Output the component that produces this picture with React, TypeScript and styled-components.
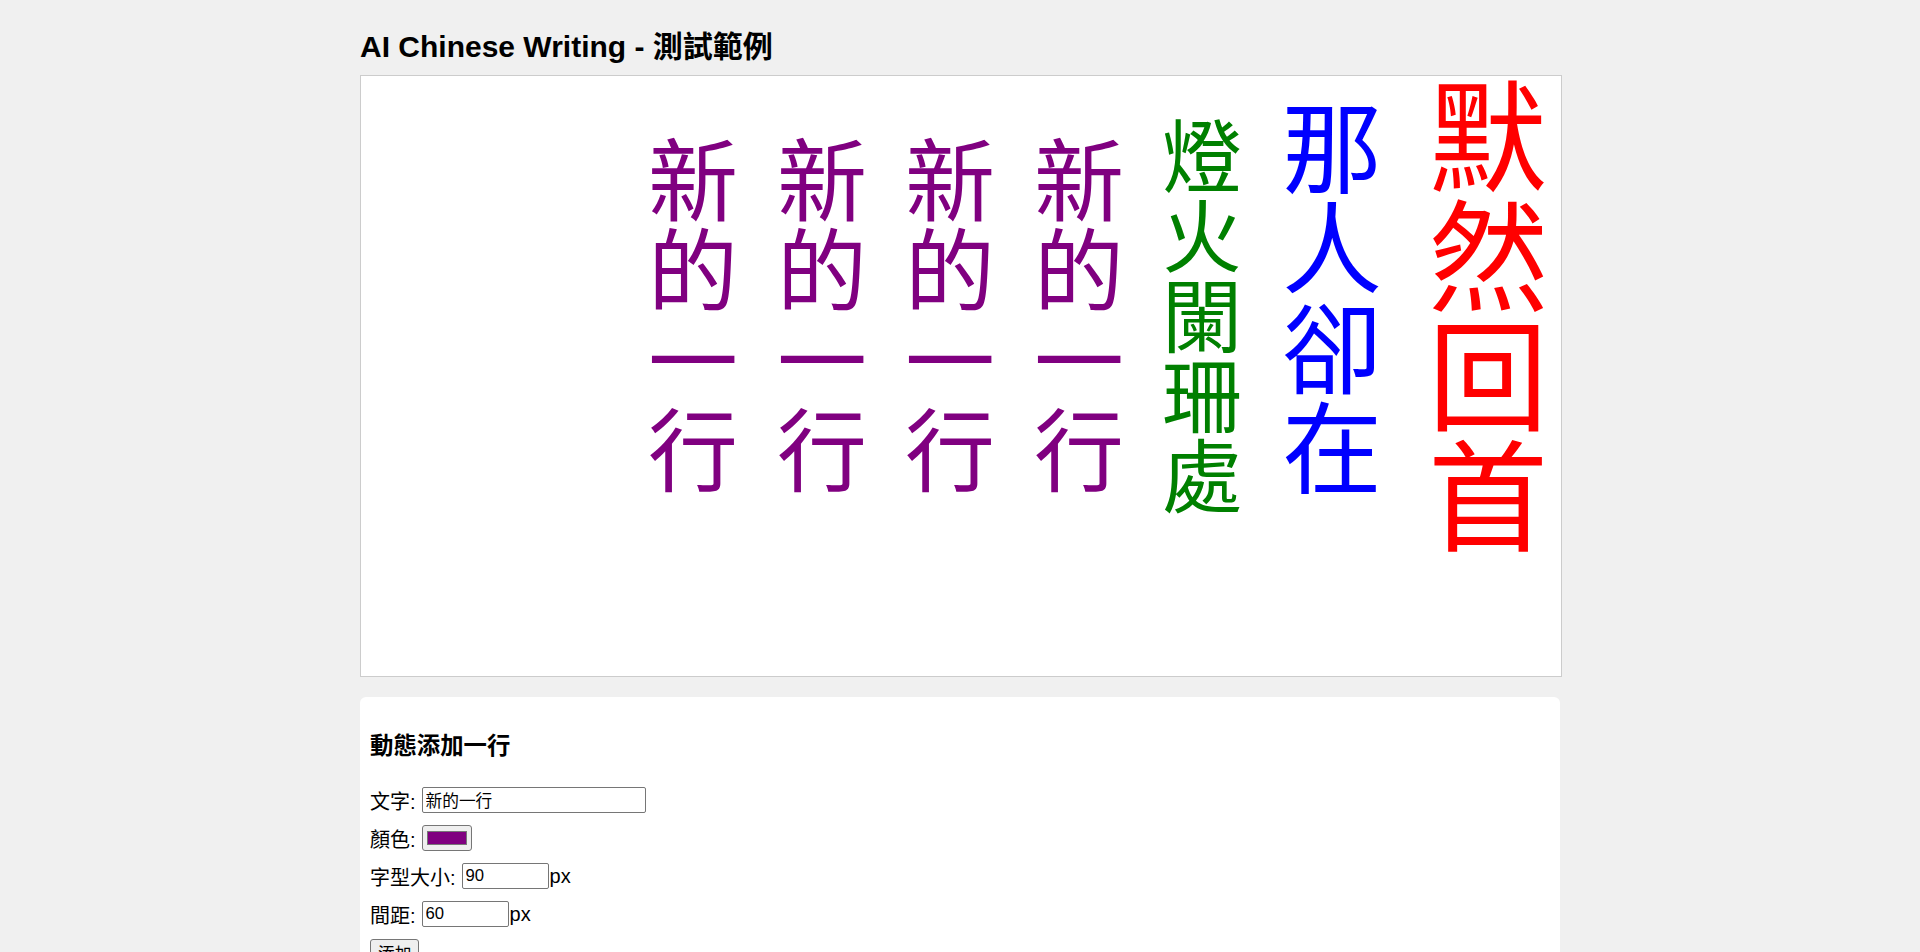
import React from "react";
import styled, { createGlobalStyle } from "styled-components";

const GlobalStyle = createGlobalStyle`
  html, body {
    margin: 0;
    padding: 0;
    background: #f0f0f0;
  }

  body {
    font-family: "Liberation Sans", "Noto Sans CJK TC", Arial, sans-serif;
    color: #000;
  }
`;

// columns drawn right to left, like the canvas output
const lines = [
  { text: "默然回首", color: "red", size: 120, x: 1067, y: -6 },
  { text: "那人卻在", color: "blue", size: 100, x: 921, y: 17 },
  { text: "燈火闌珊處", color: "green", size: 80, x: 801, y: 35 },
  { text: "新的一行", color: "purple", size: 90, x: 673, y: 54 },
  { text: "新的一行", color: "purple", size: 90, x: 544, y: 54 },
  { text: "新的一行", color: "purple", size: 90, x: 416, y: 54 },
  { text: "新的一行", color: "purple", size: 90, x: 287, y: 54 },
];

export default function App() {
  return (
    <>
      <GlobalStyle />
      <Page>
        <Title>AI Chinese Writing - 測試範例</Title>

        <Canvas>
          {lines.map((line, i) => (
            <Column
              key={i}
              $color={line.color}
              $size={line.size}
              $x={line.x}
              $y={line.y}
            >
              {Array.from(line.text).map((ch, j) => (
                <Char key={j}>{ch}</Char>
              ))}
            </Column>
          ))}
        </Canvas>

        <Controls>
          <Heading>動態添加一行</Heading>

          <Row>
            <Label>文字:</Label>
            <TextInput type="text" defaultValue="新的一行" />
          </Row>
          <Row>
            <Label>顏色:</Label>
            <ColorInput type="color" defaultValue="#800080" />
          </Row>
          <Row>
            <Label>字型大小:</Label>
            <NumberInput type="number" defaultValue={90} />
            <Unit>px</Unit>
          </Row>
          <Row>
            <Label>間距:</Label>
            <NumberInput type="number" defaultValue={60} />
            <Unit>px</Unit>
          </Row>
          <Row>
            <AddButton type="button">添加</AddButton>
          </Row>
        </Controls>
      </Page>
    </>
  );
}

const Page = styled.div`
  width: 1200px;
  margin: 0 auto;
  padding: 29px 0 40px;
`;

const Title = styled.h2`
  margin: 0 0 10px;
  font-size: 30px;
  line-height: 36px;
  font-weight: bold;
`;

const Canvas = styled.div`
  position: relative;
  width: 1200px;
  height: 600px;
  border: 1px solid #ccc;
  background: #fff;
  overflow: hidden;
`;

const Column = styled.div<{ $color: string; $size: number; $x: number; $y: number }>`
  position: absolute;
  left: ${(p) => p.$x}px;
  top: ${(p) => p.$y}px;
  display: flex;
  flex-direction: column;
  font-family: "Noto Sans CJK TC", sans-serif;
  font-size: ${(p) => p.$size}px;
  line-height: 1;
  color: ${(p) => p.$color};
`;

const Char = styled.span`
  display: block;
  width: 1em;
  height: 1em;
  text-align: center;
`;

const Controls = styled.div`
  box-sizing: border-box;
  width: 1200px;
  margin-top: 20px;
  padding: 10px;
  background: #fff;
  border-radius: 6px;
  font-size: 20px;
`;

const Heading = styled.h3`
  margin: 25px 0 27px;
  font-size: 23.4px;
  line-height: 28px;
  font-weight: bold;
`;

const Row = styled.div`
  display: flex;
  align-items: center;
  height: 26px;
  margin-bottom: 12px;
`;

const Label = styled.span`
  margin-right: 6px;
  white-space: nowrap;
`;

const Unit = styled.span`
  margin-left: 1px;
`;

const fieldBase = `
  box-sizing: border-box;
  height: 26px;
  margin: 0;
  border: 1px solid #767676;
  border-radius: 2px;
  background: #fff;
  color: #000;
  font-family: "Liberation Sans", "Noto Sans CJK TC", Arial, sans-serif;
  font-size: 16.7px;
  padding: 1px 3px;
  outline: none;
`;

const TextInput = styled.input`
  ${fieldBase}
  width: 224px;
`;

const NumberInput = styled.input`
  ${fieldBase}
  width: 87px;

  &::-webkit-inner-spin-button,
  &::-webkit-outer-spin-button {
    -webkit-appearance: none;
    margin: 0;
  }
`;

const ColorInput = styled.input`
  box-sizing: border-box;
  width: 50px;
  height: 26px;
  margin: 0;
  padding: 0;
  border: 1px solid #767676;
  border-radius: 3px;
  background: #efefef;
  cursor: pointer;

  &::-webkit-color-swatch-wrapper {
    padding: 5px 4px;
  }

  &::-webkit-color-swatch {
    border: 1px solid #777;
    border-radius: 0;
  }
`;

const AddButton = styled.button`
  box-sizing: border-box;
  height: 27px;
  margin: 0;
  padding: 1px 7px;
  border: 1px solid #767676;
  border-radius: 3px;
  background: #efefef;
  color: #000;
  font-family: "Liberation Sans", "Noto Sans CJK TC", Arial, sans-serif;
  font-size: 16.7px;
`;
